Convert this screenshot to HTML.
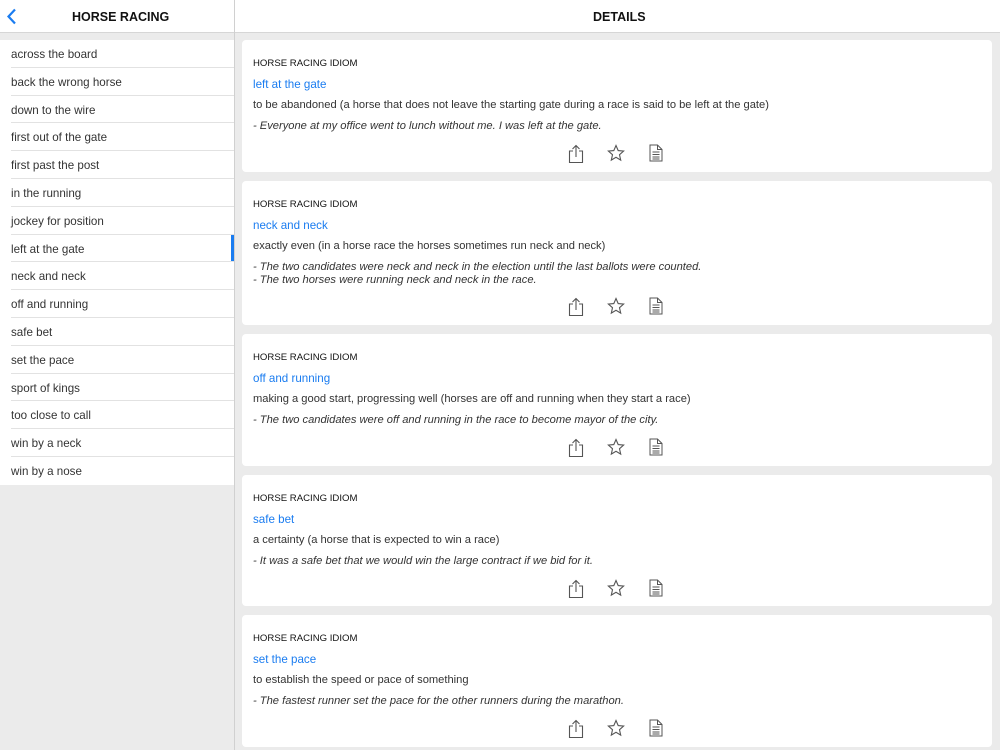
<!DOCTYPE html>
<html><head><meta charset="utf-8"><style>
*{margin:0;padding:0;box-sizing:border-box}
body{width:1000px;height:750px;overflow:hidden;background:#ebebeb;font-family:"Liberation Sans",sans-serif;color:#222;position:relative}
.hdr{position:absolute;top:0;left:0;width:1000px;height:33px;background:#fff;border-bottom:1px solid #d6d6d6}
.hdr .t{position:absolute;top:10px;font-size:12.5px;font-weight:bold;color:#111}
.vl{position:absolute;left:234px;top:0;width:1px;height:750px;background:#d0d0d0}
.list{position:absolute;left:0;top:40px;width:234px;background:#fff}
.row{height:27.8px;line-height:29px;padding-left:11px;font-size:11.6px;color:#333;position:relative}
.row:after{content:"";position:absolute;left:11px;right:0;bottom:0;height:1px;background:#e2e2e2}
.row:last-child:after{display:none}
.sel:before{content:"";position:absolute;right:0;top:0;width:3px;height:27px;background:#1a7cf0}
.card{position:absolute;left:242px;width:750px;background:#fff;border-radius:4px;font-size:11.15px}
.card .k{position:absolute;left:11px;top:18px;font-size:9.6px;color:#111}
.card .ti{position:absolute;left:11px;top:38px;font-size:11.6px;color:#1a7cf0}
.card .d{position:absolute;left:11px;top:59px;color:#333}
.card .e{position:absolute;left:11px;top:80px;font-style:italic;color:#333;line-height:13px}
.ic{position:absolute;left:0;width:750px;height:20px}
.ic svg{position:absolute;top:0}
</style></head><body>
<div class="hdr"><svg style="position:absolute;left:6px;top:8px" width="12" height="17" viewBox="0 0 12 17"><path d="M9 1.5L2.5 8.5L9 15.5" fill="none" stroke="#1a7cf0" stroke-width="2.2"/></svg>
<div class="t" style="left:72px">HORSE RACING</div><div class="t" style="left:593px">DETAILS</div></div>
<div class="vl"></div>
<div class="list">
<div class="row">across the board</div><div class="row">back the wrong horse</div><div class="row">down to the wire</div><div class="row">first out of the gate</div><div class="row">first past the post</div><div class="row">in the running</div><div class="row">jockey for position</div><div class="row sel">left at the gate</div><div class="row">neck and neck</div><div class="row">off and running</div><div class="row">safe bet</div><div class="row">set the pace</div><div class="row">sport of kings</div><div class="row">too close to call</div><div class="row">win by a neck</div><div class="row">win by a nose</div>
</div>

<div class="card" style="top:40px;height:132px"><div class="k">HORSE RACING IDIOM</div><div class="ti">left at the gate</div><div class="d">to be abandoned (a horse that does not leave the starting gate during a race is said to be left at the gate)</div><div class="e">- Everyone at my office went to lunch without me. I was left at the gate.</div><div class="ic" style="top:104px"></div></div>
<div class="card" style="top:181px;height:144px"><div class="k">HORSE RACING IDIOM</div><div class="ti">neck and neck</div><div class="d">exactly even (in a horse race the horses sometimes run neck and neck)</div><div class="e">- The two candidates were neck and neck in the election until the last ballots were counted.<br>- The two horses were running neck and neck in the race.</div><div class="ic" style="top:116px"></div></div>
<div class="card" style="top:334px;height:132px"><div class="k">HORSE RACING IDIOM</div><div class="ti">off and running</div><div class="d">making a good start, progressing well (horses are off and running when they start a race)</div><div class="e">- The two candidates were off and running in the race to become mayor of the city.</div><div class="ic" style="top:104px"></div></div>
<div class="card" style="top:475px;height:131px"><div class="k">HORSE RACING IDIOM</div><div class="ti">safe bet</div><div class="d">a certainty (a horse that is expected to win a race)</div><div class="e">- It was a safe bet that we would win the large contract if we bid for it.</div><div class="ic" style="top:104px"></div></div>
<div class="card" style="top:615px;height:132px"><div class="k">HORSE RACING IDIOM</div><div class="ti">set the pace</div><div class="d">to establish the speed or pace of something</div><div class="e">- The fastest runner set the pace for the other runners during the marathon.</div><div class="ic" style="top:104px"></div></div>

<script>
var ic='<svg style="left:326px" width="16" height="20" viewBox="0 0 16 20"><path d="M5 7H1.5V18.5H14.5V7H11M8 13V1.5M4.5 5L8 1.5L11.5 5" fill="none" stroke="#555" stroke-width="1.1"/></svg>'+
'<svg style="left:365px" width="18" height="18" viewBox="0 0 18 18"><path d="M9 1.5L11.2 6.6L16.6 7.1L12.5 10.7L13.7 16.1L9 13.3L4.3 16.1L5.5 10.7L1.4 7.1L6.8 6.6Z" fill="none" stroke="#555" stroke-width="1.1"/></svg>'+
'<svg style="left:407px" width="14" height="18" viewBox="0 0 14 18"><path d="M1 1H8.5L13 5.5V17H1ZM8.5 1V5.5H13M3.5 8H10.5M3.5 10.5H10.5M3.5 13H10.5M3.5 15H10.5" fill="none" stroke="#555" stroke-width="1"/></svg>';
document.querySelectorAll('.ic').forEach(function(e){e.innerHTML=ic});
</script>
</body></html>
